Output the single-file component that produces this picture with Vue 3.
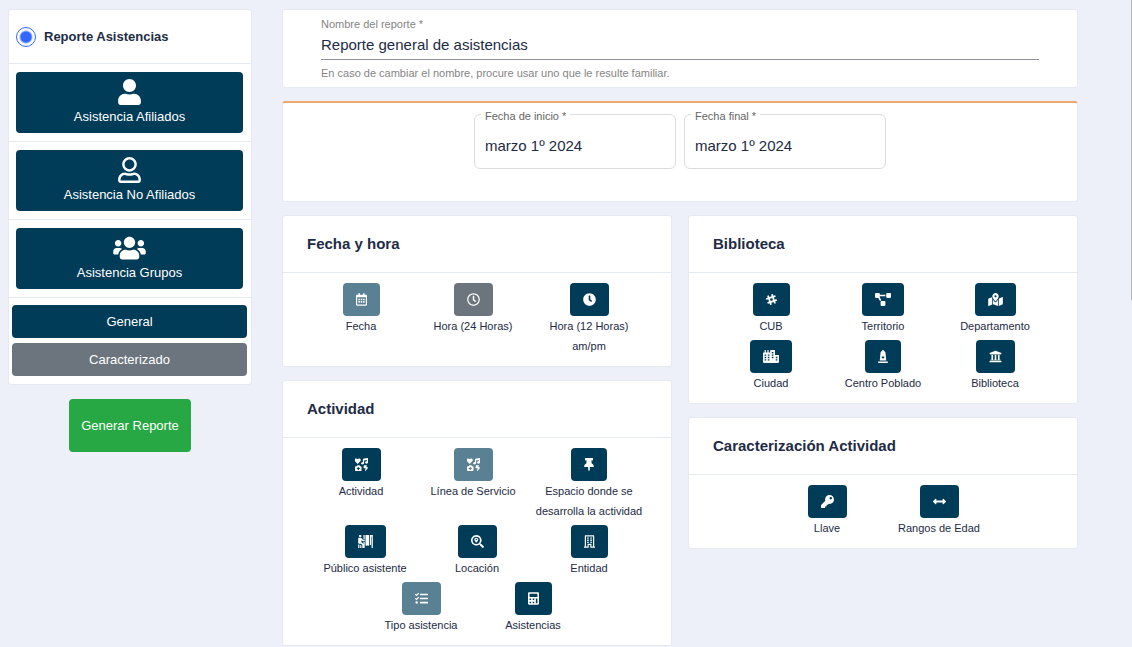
<script setup>
import { ref, h } from 'vue'

const reportName = ref('Reporte general de asistencias')
const startDate = ref('marzo 1º 2024')
const endDate = ref('marzo 1º 2024')
const reportType = ref('asistencias')

// [viewBox width, path data]; every icon is 512 units tall
const icons = {
  user: [448, 'M224 256c70.7 0 128-57.3 128-128S294.7 0 224 0 96 57.3 96 128s57.3 128 128 128zm89.6 32h-16.7c-22.2 10.2-46.9 16-72.9 16s-50.6-5.8-72.9-16h-16.7C60.2 288 0 348.2 0 422.4V464c0 26.5 21.5 48 48 48h352c26.5 0 48-21.5 48-48v-41.6c0-74.2-60.2-134.4-134.4-134.4z'],
  userOutline: [448, 'M313.6 304c-28.7 0-42.5 16-89.6 16-47.1 0-60.8-16-89.6-16C60.2 304 0 364.2 0 438.4V464c0 26.5 21.5 48 48 48h352c26.5 0 48-21.5 48-48v-25.6c0-74.2-60.2-134.4-134.4-134.4zM400 464H48v-25.6c0-47.6 38.8-86.4 86.4-86.4 14.6 0 38.3 16 89.6 16 51.7 0 74.9-16 89.6-16 47.6 0 86.4 38.8 86.4 86.4V464zM224 288c79.5 0 144-64.5 144-144S303.5 0 224 0 80 64.5 80 144s64.5 144 144 144zm0-240c52.9 0 96 43.1 96 96s-43.1 96-96 96-96-43.1-96-96 43.1-96 96-96z'],
  users: [640, 'M96 224c35.3 0 64-28.7 64-64s-28.7-64-64-64-64 28.7-64 64 28.7 64 64 64zm448 0c35.3 0 64-28.7 64-64s-28.7-64-64-64-64 28.7-64 64 28.7 64 64 64zm32 32h-64c-17.6 0-33.5 7.1-45.1 18.6 40.3 22.1 68.9 62 75.1 109.4h66c17.7 0 32-14.3 32-32v-32c0-35.3-28.7-64-64-64zm-256 0c61.9 0 112-50.1 112-112S381.9 32 320 32 208 82.1 208 144s50.1 112 112 112zm76.8 32h-8.3c-20.8 10-43.9 16-68.5 16s-47.6-6-68.5-16h-8.3C179.6 288 128 339.6 128 403.2V432c0 26.5 21.5 48 48 48h288c26.5 0 48-21.5 48-48v-28.8c0-63.6-51.6-115.2-115.2-115.2zm-223.7-13.4C161.5 263.1 145.6 256 128 256H64c-35.3 0-64 28.7-64 64v32c0 17.7 14.3 32 32 32h65.9c6.3-47.4 34.9-87.3 75.2-109.4z'],
  calendar: [448, 'M148 288h-40c-6.600 0-12-5.400-12-12v-40c0-6.600 5.400-12 12-12h40c6.600 0 12 5.400 12 12v40c0 6.600-5.400 12-12 12zm108-12v-40c0-6.600-5.400-12-12-12h-40c-6.600 0-12 5.400-12 12v40c0 6.600 5.400 12 12 12h40c6.600 0 12-5.400 12-12zm96 0v-40c0-6.600-5.400-12-12-12h-40c-6.600 0-12 5.400-12 12v40c0 6.600 5.400 12 12 12h40c6.600 0 12-5.400 12-12zm-96 96v-40c0-6.600-5.400-12-12-12h-40c-6.600 0-12 5.400-12 12v40c0 6.600 5.400 12 12 12h40c6.600 0 12-5.400 12-12zm-96 0v-40c0-6.600-5.400-12-12-12h-40c-6.600 0-12 5.400-12 12v40c0 6.600 5.400 12 12 12h40c6.600 0 12-5.400 12-12zm192 0v-40c0-6.600-5.400-12-12-12h-40c-6.600 0-12 5.400-12 12v40c0 6.600 5.400 12 12 12h40c6.600 0 12-5.400 12-12zm96-260v352c0 26.500-21.500 48-48 48H48c-26.500 0-48-21.500-48-48V112c0-26.500 21.500-48 48-48h48V12c0-6.600 5.400-12 12-12h40c6.600 0 12 5.400 12 12v52h128V12c0-6.600 5.400-12 12-12h40c6.600 0 12 5.400 12 12v52h48c26.500 0 48 21.500 48 48zm-48 346V160H48v298c0 3.300 2.700 6 6 6h340c3.300 0 6-2.700 6-6z'],
  clockOutline: [512, 'M256 8C119 8 8 119 8 256s111 248 248 248 248-111 248-248S393 8 256 8zm0 448c-110.500 0-200-89.500-200-200S145.500 56 256 56s200 89.500 200 200-89.500 200-200 200zm61.800-104.400l-84.900-61.700c-3.100-2.300-4.900-5.900-4.900-9.700V116c0-6.600 5.400-12 12-12h32c6.600 0 12 5.400 12 12v141.700l66.800 48.600c5.400 3.900 6.500 11.400 2.600 16.800L334.600 349c-3.900 5.300-11.400 6.500-16.800 2.600z'],
  clock: [512, 'M256,8C119,8,8,119,8,256S119,504,256,504,504,393,504,256,393,8,256,8Zm92.490,313h0l-20,25a16,16,0,0,1-22.490,2.500h0l-67-49.720a40,40,0,0,1-15-31.230V112a16,16,0,0,1,16-16h32a16,16,0,0,1,16,16V256l58,42.500A16,16,0,0,1,348.490,321Z'],
  pin: [384, 'M298.028 214.267L285.793 96H328c13.255 0 24-10.745 24-24V24c0-13.255-10.745-24-24-24H56C42.745 0 32 10.745 32 24v48c0 13.255 10.745 24 24 24h42.207L85.972 214.267C37.465 236.820 0 277.261 0 328c0 13.255 10.745 24 24 24h136v104.007c0 1.242.289 2.467.845 3.578l24 48c2.941 5.882 11.364 5.893 14.311 0l24-48a8.008 8.008 0 0 0 .845-3.578V352h136c13.255 0 24-10.745 24-24-.001-51.183-37.983-91.420-85.973-113.733z'],
  key: [512, 'M512 176.001C512 273.203 433.202 352 336 352c-11.220 0-22.190-1.062-32.827-3.069l-24.012 27.014A23.999 23.999 0 0 1 261.223 384H224v40c0 13.255-10.745 24-24 24h-40v40c0 13.255-10.745 24-24 24H24c-13.255 0-24-10.745-24-24v-78.059c0-6.365 2.529-12.470 7.029-16.971l161.802-161.802C163.108 213.814 160 195.271 160 176 160 78.798 238.797.001 335.999 0 433.488-.001 512 78.511 512 176.001zM336 128c0 26.510 21.490 48 48 48s48-21.490 48-48-21.490-48-48-48-48 21.490-48 48z'],
  library: [512, 'M496 128v16a8 8 0 0 1-8 8h-24v12c0 6.627-5.373 12-12 12H60c-6.627 0-12-5.373-12-12v-12H24a8 8 0 0 1-8-8v-16a8 8 0 0 1 4.941-7.392l232-88a7.996 7.996 0 0 1 6.118 0l232 88A8 8 0 0 1 496 128zm-24 304H40c-13.255 0-24 10.745-24 24v16a8 8 0 0 0 8 8h464a8 8 0 0 0 8-8v-16c0-13.255-10.745-24-24-24zM96 192v192H60c-6.627 0-12 5.373-12 12v20h416v-20c0-6.627-5.373-12-12-12h-36V192h-64v192h-64V192h-64v192h-64V192H96z'],
  arrows: [512, 'M377.941 169.941V216H134.059v-46.059c0-21.382-25.851-32.090-40.971-16.971L7.029 239.029c-9.373 9.373-9.373 24.568 0 33.941l86.059 86.059c15.119 15.119 40.971 4.411 40.971-16.971V296h243.882v46.059c0 21.382 25.851 32.090 40.971 16.971l86.059-86.059c9.373-9.373 9.373-24.568 0-33.941l-86.059-86.059c-15.119-15.120-40.971-4.412-40.971 16.970z'],
  diagram: [640, 'M384 320H256c-17.670 0-32 14.330-32 32v128c0 17.670 14.330 32 32 32h128c17.670 0 32-14.330 32-32V352c0-17.670-14.330-32-32-32zM192 32c0-17.670-14.330-32-32-32H32C14.330 0 0 14.330 0 32v128c0 17.670 14.330 32 32 32h95.720l73.160 128.040C211.980 300.980 232.400 288 256 288h.280L192 175.510V128h224V64H192V32zM608 0H480c-17.670 0-32 14.330-32 32v128c0 17.670 14.330 32 32 32h128c17.670 0 32-14.330 32-32V32c0-17.670-14.330-32-32-32z'],
  map: [576, 'M288 0c-69.590 0-126 56.410-126 126 0 56.260 82.350 158.800 113.900 196.020 6.390 7.540 17.820 7.540 24.200 0C331.650 284.800 414 182.260 414 126 414 56.410 357.590 0 288 0zm0 168c-23.200 0-42-18.800-42-42s18.800-42 42-42 42 18.800 42 42-18.800 42-42 42zM20.120 215.950A32.006 32.006 0 0 0 0 245.660v250.320c0 11.320 11.430 19.060 21.940 14.860L160 448V214.920c-8.840-15.980-16.070-31.540-21.250-46.420L20.120 215.950zM288 359.670c-14.070 0-27.380-6.180-36.510-16.960-19.660-23.200-40.570-49.620-59.490-76.720v182l192 64V266c-18.920 27.090-39.820 53.520-59.490 76.720-9.130 10.770-22.440 16.950-36.510 16.950zm266.060-198.510L416 224v288l139.880-55.950A31.996 31.996 0 0 0 576 426.340V176.020c0-11.320-11.430-19.060-21.940-14.860z'],
  city: [640, 'M616 192H480V24c0-13.260-10.740-24-24-24H312c-13.260 0-24 10.740-24 24v72h-64V16c0-8.840-7.160-16-16-16h-16c-8.840 0-16 7.160-16 16v80h-64V16c0-8.840-7.160-16-16-16H80c-8.840 0-16 7.160-16 16v80H24c-13.260 0-24 10.740-24 24v360c0 17.670 14.330 32 32 32h576c17.670 0 32-14.330 32-32V216c0-13.260-10.750-24-24-24zM64 172h64v56H64zM64 268h64v56H64zM64 364h64v56H64zM192 172h64v56h-64zM192 268h64v56h-64zM192 364h64v56h-64zM352 76h64v56h-64zM352 172h64v56h-64zM352 268h64v56h-64zM512 268h64v56h-64zM512 364h64v56h-64z'],
  monument: [384, 'M368 448H16c-8.840 0-16 7.160-16 16v32c0 8.840 7.160 16 16 16h352c8.840 0 16-7.160 16-16v-32c0-8.840-7.160-16-16-16zm-78.860-347.260a31.970 31.970 0 0 0-9.210-19.440L203.310 4.690c-6.250-6.250-16.380-6.250-22.630 0l-76.600 76.610a31.970 31.970 0 0 0-9.210 19.440L64 416h256l-30.860-315.260zM240 307.200c0 6.400-6.400 12.800-12.800 12.800h-70.400c-6.400 0-12.800-6.400-12.800-12.800v-38.400c0-6.400 6.400-12.800 12.800-12.800h70.400c6.400 0 12.800 6.400 12.800 12.800v38.400z'],
  hash: [448, 'M446.200 270.400c-6.200-19-26.900-29.100-46-22.900l-45.400 15.100-30.300-90 45.400-15.100c19.100-6.200 29.100-26.800 23-45.900-6.200-19-26.900-29.100-46-22.900l-45.400 15.100-15.700-47c-6.200-19-26.900-29.100-46-22.900-19.100 6.200-29.100 26.800-23 45.900l15.700 47-93.400 31.200-15.700-47c-6.200-19-26.900-29.100-46-22.900-19.100 6.200-29.100 26.800-23 45.900l15.700 47-45.300 15c-19.100 6.200-29.100 26.800-23 45.900 5 14.500 19.100 24 33.600 24.600 6.800 1 12-1.600 57.700-16.800l30.300 90L78 354.800c-19 6.200-29.100 26.900-23 45.900 5 14.500 19.100 24 33.600 24.600 6.800 1 12-1.600 57.700-16.800l15.700 47c5.900 16.900 24.700 29 46 22.900 19.100-6.200 29.100-26.800 23-45.900l-15.700-47 93.600-31.300 15.700 47c5.900 16.900 24.700 29 46 22.900 19.100-6.200 29.100-26.800 23-45.900l-15.700-47 45.400-15.100c19-6 29.100-26.700 22.900-45.700zm-254.100 47.200l-30.300-90.200 93.500-31.300 30.300 90.200-93.500 31.300z'],
  calculator: [448, 'M400 0H48C22 0 0 22 0 48v416c0 26 22 48 48 48h352c26 0 48-22 48-48V48c0-26-22-48-48-48zM64 64h320v128H64zM64 256h64v64H64zM192 256h64v64h-64zM64 384h64v64H64zM192 384h64v64h-64zM320 256h64v192h-64z'],
  tasks: [512, 'M139.610 35.500a12 12 0 0 0-17 0L58.930 98.810l-22.700-22.120a12 12 0 0 0-17 0L3.530 92.410a12 12 0 0 0 0 17l47.590 47.400a12.780 12.780 0 0 0 17.610 0l15.590-15.620L156.520 69a12.090 12.090 0 0 0 .090-17zm0 159.190a12 12 0 0 0-17 0l-63.680 63.720-22.700-22.100a12 12 0 0 0-17 0L3.530 252a12 12 0 0 0 0 17L51 316.500a12.770 12.770 0 0 0 17.600 0l15.700-15.690 72.200-72.220a12 12 0 0 0 .090-16.900zM64 368c-26.490 0-48.590 21.500-48.590 48S37.530 464 64 464a48 48 0 0 0 0-96zm432 16H208a16 16 0 0 0-16 16v32a16 16 0 0 0 16 16h288a16 16 0 0 0 16-16v-32a16 16 0 0 0-16-16zm0-320H208a16 16 0 0 0-16 16v32a16 16 0 0 0 16 16h288a16 16 0 0 0 16-16V80a16 16 0 0 0-16-16zm0 160H208a16 16 0 0 0-16 16v32a16 16 0 0 0 16 16h288a16 16 0 0 0 16-16v-32a16 16 0 0 0-16-16z'],
  building: [448, 'M56 0h336c13 0 24 11 24 24v440h20c7 0 12 5 12 12v36H256V396h-64v116H0v-36c0-7 5-12 12-12h20V24C32 11 43 0 56 0zM80 48v416h64V360c0-7 5-12 12-12h136c7 0 12 5 12 12v104h64V48zM128 88h64v56h-64zM256 88h64v56h-64zM128 176h64v56h-64zM256 176h64v56h-64zM128 264h64v56h-64zM256 264h64v56h-64z'],
  activities: [512, 'M116 225l91-94c26-28 25-73-5-98-26-22-65-18-88 7l-10 9-9-9C71 15 33 11 7 33c-30 25-31 70-5 98l90 94c7 7 17 7 24 0zM476 1L328 33c-10 2-18 11-18 22v110c-38-3-70 18-70 45s25 46 58 46 60-20 60-47V101l106-23v55c-38-3-68 18-68 45s25 46 58 46 58-20 58-47V25c0-16-16-28-36-24zM32 320h40l14-24c4-5 8-8 14-8h72c6 0 11 3 14 8l14 24h24c18 0 32 14 32 32v128c0 18-14 32-32 32H32c-18 0-32-14-32-32V352c0-18 14-32 32-32zM110 350v40H70v40h40v40h40v-40h40v-40h-40v-40zM361 288h94c10 0 17 9 14 18l-25 62h52c13 0 20 13 14 24l-86 112c-10 14-28 7-26-9l20-91h-64c-12 0-20-9-18-20l12-82c1-8 6-14 13-14z'],
  booth: [576, 'M32 40a48 48 0 1 1 96 0 48 48 0 0 1-96 0zM40 112h56c20 0 38 8 50 24l54 65h56v44h-66c-12 0-24-5-32-14l-30-36v89l64 55c12 10 18 24 18 40v133h-48V393l-52-44-74-1c-22 0-36-16-36-38V152c0-22 18-40 40-40zM0 370h48v142H0zM80 382l48 38v92H80zM208 0h48v176h-48zM208 272h48v240h-48zM288 0h144v400c-24 28-54 26-74 0-22 28-48 28-70 0zM464 0h112v512h-48V56h-20v342c-14 8-30 8-44 0z'],
  searchPlace: [512, 'M208 0a208 208 0 0 1 165 335l17 17c10-2 20 1 28 8l86 87c10 10 10 24 0 34l-24 24c-10 10-24 10-34 0l-88-88c-7-7-9-17-7-26l-17-17A208 208 0 1 1 208 0zM208 64a144 144 0 1 0 0 288 144 144 0 0 0 0-288zM208 104c44 0 78 34 78 76 0 37-38 83-66 120-6 8-18 8-24 0-28-37-66-83-66-120 0-42 34-76 78-76zM208 152a28 28 0 1 0 0 56 28 28 0 0 0 0-56z']
}

const FaIcon = (props) => {
  const [width, path] = icons[props.name]
  return h('svg', {
    viewBox: `0 0 ${width} 512`,
    width: Math.round((width * props.size) / 512),
    height: props.size,
    'aria-hidden': 'true'
  }, [h('path', { d: path, fill: 'currentColor', 'fill-rule': 'evenodd' })])
}
FaIcon.props = ['name', 'size']

const sources = [
  { label: 'Asistencia Afiliados', icon: 'user' },
  { label: 'Asistencia No Afiliados', icon: 'userOutline' },
  { label: 'Asistencia Grupos', icon: 'users' }
]

const columns = [
  [
    {
      title: 'Fecha y hora',
      items: [
        { label: 'Fecha', icon: 'calendar', tone: 'faded' },
        { label: 'Hora (24 Horas)', icon: 'clockOutline', tone: 'gray' },
        { label: 'Hora (12 Horas) am/pm', icon: 'clock', wide: true }
      ]
    },
    {
      title: 'Actividad',
      items: [
        { label: 'Actividad', icon: 'activities' },
        { label: 'Línea de Servicio', icon: 'activities', tone: 'faded' },
        { label: 'Espacio donde se desarrolla la actividad', icon: 'pin', wide: true },
        { label: 'Público asistente', icon: 'booth' },
        { label: 'Locación', icon: 'searchPlace' },
        { label: 'Entidad', icon: 'building' },
        { label: 'Tipo asistencia', icon: 'tasks', tone: 'faded' },
        { label: 'Asistencias', icon: 'calculator' }
      ]
    }
  ],
  [
    {
      title: 'Biblioteca',
      items: [
        { label: 'CUB', icon: 'hash' },
        { label: 'Territorio', icon: 'diagram' },
        { label: 'Departamento', icon: 'map' },
        { label: 'Ciudad', icon: 'city' },
        { label: 'Centro Poblado', icon: 'monument' },
        { label: 'Biblioteca', icon: 'library' }
      ]
    },
    {
      title: 'Caracterización Actividad',
      items: [
        { label: 'Llave', icon: 'key' },
        { label: 'Rangos de Edad', icon: 'arrows' }
      ]
    }
  ]
]
</script>

<template>
  <div class="page">
    <aside class="sidebar">
      <div class="card">
        <label class="radio-row">
          <input v-model="reportType" class="radio" type="radio" name="report" value="asistencias" />
          <span>Reporte Asistencias</span>
        </label>
        <div v-for="source in sources" :key="source.label" class="source">
          <button class="btn source-btn" type="button">
            <FaIcon :name="source.icon" :size="26" />
            <span>{{ source.label }}</span>
          </button>
        </div>
        <div class="modes">
          <button class="btn mode-btn" type="button">General</button>
          <button class="btn mode-btn gray" type="button">Caracterizado</button>
        </div>
      </div>
      <button class="btn generate" type="button">Generar Reporte</button>
    </aside>

    <main class="content">
      <section class="card name-card">
        <label class="field-label" for="report-name">Nombre del reporte *</label>
        <input id="report-name" v-model="reportName" class="name-input" type="text" />
        <p class="hint">En caso de cambiar el nombre, procure usar uno que le resulte familiar.</p>
      </section>

      <section class="card dates-card">
        <fieldset class="date-field">
          <legend><label for="start-date">Fecha de inicio *</label></legend>
          <input id="start-date" v-model="startDate" class="date-input" type="text" />
        </fieldset>
        <fieldset class="date-field">
          <legend><label for="end-date">Fecha final *</label></legend>
          <input id="end-date" v-model="endDate" class="date-input" type="text" />
        </fieldset>
      </section>

      <div class="columns">
        <div v-for="(column, index) in columns" :key="index" class="column">
          <section v-for="group in column" :key="group.title" class="card">
            <h2 class="card-title">{{ group.title }}</h2>
            <div class="items">
              <div v-for="item in group.items" :key="item.label" class="item" :class="{ wide: item.wide }">
                <button class="btn icon-btn" :class="item.tone" type="button" :aria-label="item.label">
                  <FaIcon :name="item.icon" :size="13" />
                </button>
                <span class="item-label">{{ item.label }}</span>
              </div>
            </div>
          </section>
        </div>
      </div>
    </main>
    <div class="scroll-thumb"></div>
  </div>
</template>

<style>
body {
  background: #edf0f8;
}
</style>

<style scoped>
.page {
  position: relative;
  display: grid;
  grid-template-columns: 244px minmax(0, 1fr);
  gap: 30px;
  align-items: start;
  padding: 9px 54px 0 8px;
  color: #222b45;
  font-family: "Liberation Sans", Arial, sans-serif;
  font-size: 13px;
}
.page * {
  box-sizing: border-box;
}
.card {
  background: #fff;
  border: 1px solid #e4e9f2;
  border-radius: 3px;
}
.btn {
  border: 0;
  border-radius: 4px;
  background: #003b57;
  color: #fff;
  font: inherit;
}
.btn.gray {
  background: #6c757d;
}
.btn.faded {
  background: #5a8093;
}
.sidebar {
  display: flex;
  flex-direction: column;
  align-items: center;
  gap: 14px;
}
.sidebar .card {
  width: 100%;
}
.radio-row {
  display: flex;
  align-items: center;
  gap: 8px;
  height: 53px;
  padding: 0 7px;
  font-weight: 700;
}
.radio {
  appearance: none;
  width: 20px;
  height: 20px;
  margin: 0;
  border: 1px solid #3366ff;
  border-radius: 50%;
  background: radial-gradient(circle, #3366ff 5px, #fff 7px);
}
.source {
  padding: 8px 8px 8px 7px;
  border-top: 1px solid #e4e9f2;
}
.source-btn {
  display: flex;
  flex-direction: column;
  align-items: center;
  gap: 2px;
  width: 100%;
  padding: 7px 12px 6px;
  line-height: 20px;
}
.modes {
  display: flex;
  flex-direction: column;
  gap: 5px;
  padding: 7px 4px 8px 3px;
  border-top: 1px solid #e4e9f2;
}
.mode-btn {
  height: 33px;
}
.btn.generate {
  height: 53px;
  padding: 0 12px;
  background: #28a745;
}
.content {
  display: flex;
  flex-direction: column;
  gap: 13px;
}
.name-card {
  display: flex;
  flex-direction: column;
  padding: 7px 38px 6px;
}
.field-label,
.hint {
  margin: 0;
  color: #858585;
  font-size: 11px;
  line-height: 14px;
}
.hint {
  height: 21px;
  padding-top: 6px;
}
.name-input {
  height: 29px;
  padding: 0 0 2px;
  border: 0;
  border-bottom: 1px solid #8f8f97;
  outline: 0;
  background: none;
  color: #222b45;
  font: inherit;
  font-size: 15px;
}
.dates-card {
  display: flex;
  justify-content: center;
  gap: 8px;
  padding: 3px 24px 32px;
  border-top: 2px solid #eba871;
}
.date-field {
  width: 202px;
  min-width: 0;
  height: 63px;
  margin: 0;
  padding: 0 10px;
  border: 1px solid #dcdcdf;
  border-radius: 6px;
}
.date-field legend {
  margin-left: -4px;
  padding: 4px 4px 0;
  color: #666;
  font-size: 11px;
  line-height: 12px;
}
.date-input {
  display: block;
  width: 100%;
  height: 32px;
  margin-top: 7px;
  padding: 0;
  border: 0;
  outline: 0;
  background: none;
  color: #222b45;
  font: inherit;
  font-size: 15px;
}
.columns {
  display: grid;
  grid-template-columns: repeat(2, minmax(0, 1fr));
  gap: 16px;
  align-items: start;
}
.column {
  display: flex;
  flex-direction: column;
  gap: 13px;
}
.card-title {
  margin: 0;
  padding: 16px 24px;
  border-bottom: 1px solid #e4e9f2;
  font-size: 15px;
  font-weight: 700;
  line-height: 24px;
}
.items {
  display: flex;
  flex-wrap: wrap;
  justify-content: center;
  row-gap: 4px;
  padding: 10px 20px;
}
.item {
  display: flex;
  flex-direction: column;
  align-items: center;
  width: 112px;
}
.item.wide {
  width: 120px;
  padding: 0 5px;
}
.icon-btn {
  display: flex;
  align-items: center;
  height: 33px;
  padding: 0 13px;
}
.item-label {
  font-size: 11px;
  line-height: 20px;
  text-align: center;
}
.scroll-thumb {
  position: absolute;
  top: 0;
  right: 0;
  width: 1px;
  height: 300px;
  background: #b4b6bc;
}
</style>
